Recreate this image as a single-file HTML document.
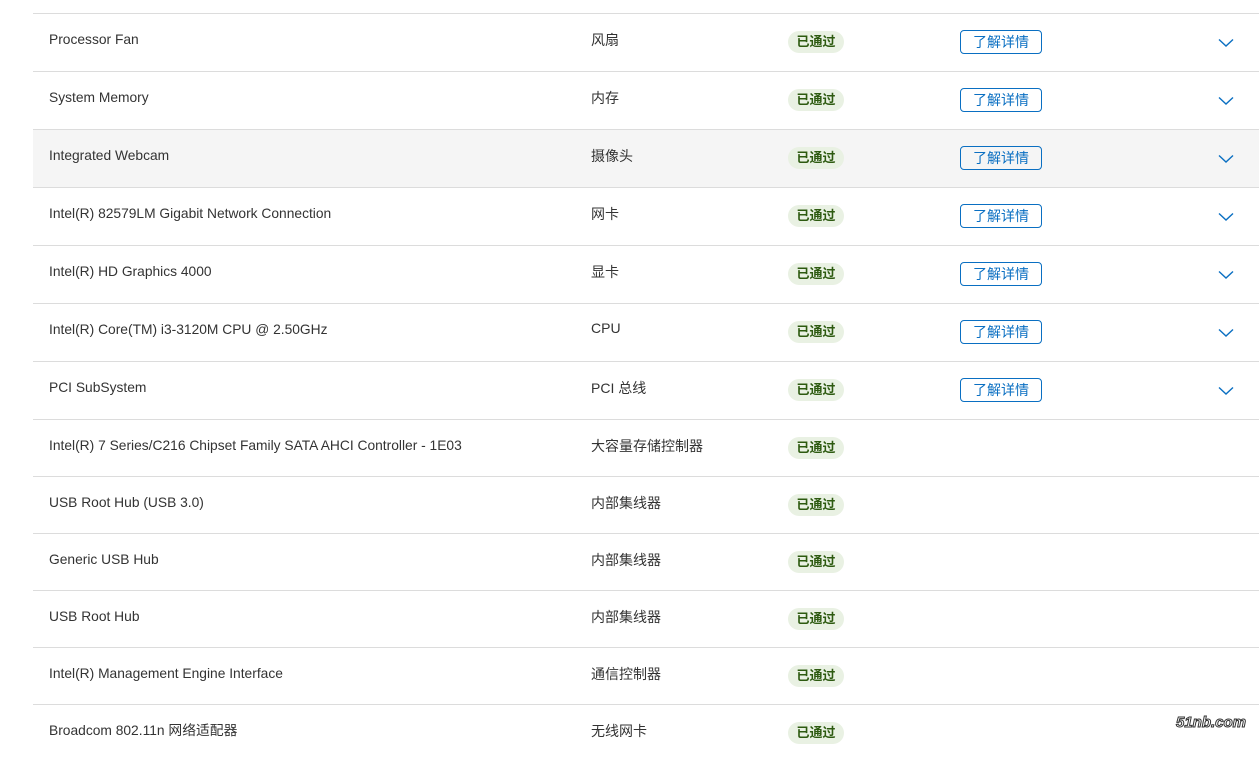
<!DOCTYPE html>
<html><head><meta charset="utf-8"><style>
body{margin:0;width:1259px;height:737px;overflow:hidden;background:#fff;font-family:"Liberation Sans","Noto Sans CJK SC",sans-serif;color:#333;font-size:14px;position:relative}
.r{position:absolute;left:33px;width:1226px;border-top:1px solid #dcdcdc}
.r span{position:absolute}
.n{left:16px;font-size:13.8px;line-height:20px}
.c{left:558px}
.b{left:755px;width:56px;height:22px;line-height:22px;border-radius:11px;background:#e9f1e3;color:#2d5a10;text-align:center;font-size:13px;font-weight:bold}
.btn{left:927px;width:80px;height:22px;line-height:22px;border:1px solid #0a6fc2;border-radius:4px;color:#0a6fc2;text-align:center;font-size:14px}
.ch{left:1185px}
.wm{position:absolute;left:1176px;top:714px;font:italic bold 15px "Liberation Sans",sans-serif;color:#fff;-webkit-text-stroke:1px #333}
</style></head><body>
<div id="rows"></div>
<script>
var d=[["Processor Fan","风扇",1],["System Memory","内存",1],["Integrated Webcam","摄像头",1],["Intel(R) 82579LM Gigabit Network Connection","网卡",1],["Intel(R) HD Graphics 4000","显卡",1],["Intel(R) Core(TM) i3-3120M CPU @ 2.50GHz","CPU",1],["PCI SubSystem","PCI 总线",1],["Intel(R) 7 Series/C216 Chipset Family SATA AHCI Controller - 1E03","大容量存储控制器",0],["USB Root Hub (USB 3.0)","内部集线器",0],["Generic USB Hub","内部集线器",0],["USB Root Hub","内部集线器",0],["Intel(R) Management Engine Interface","通信控制器",0],["Broadcom 802.11n 网络适配器","无线网卡",0]];
var tops=[13,71,129,187,245,303,361,419,476,533,590,647,704];
var h="";
d.forEach(function(r,i){var hh=(i<12?tops[i+1]-tops[i]:58);var m=Math.round(hh/2);
h+='<div class="r" style="top:'+tops[i]+'px;height:'+(hh-1)+'px;'+(i==2?'background:#f5f5f5;':'')+'">'+
'<span class="n" style="top:'+(m-13)+'px">'+r[0]+'</span><span class="c" style="top:'+(m-13)+'px">'+r[1]+'</span>'+
'<span class="b" style="top:'+(m-12)+'px">已通过</span>'+
(r[2]?'<span class="btn" style="top:'+(m-13)+'px">了解详情</span><span class="ch" style="top:'+(m-8)+'px"><svg width="16" height="10" viewBox="0 0 16 10"><path d="M1 1.5L8 8L15 1.5" fill="none" stroke="#0a6fc2" stroke-width="1.4"/></svg></span>':'')+'</div>';});
document.getElementById("rows").innerHTML=h;
</script>
<div class="wm">51nb.com</div>
</body></html>
